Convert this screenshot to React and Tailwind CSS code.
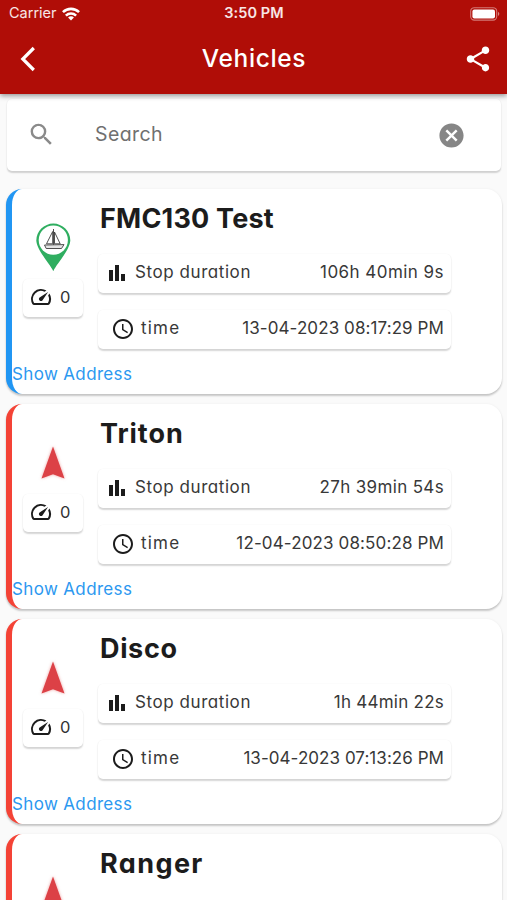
import React from "react";
import { MdSearch, MdCancel, MdShare, MdAccessTime, MdSpeed } from "react-icons/md";

const vehicles = [
  { name: "FMC130 Test", nameCls: "tracking-[0.2px]", kind: "boat", stop: "106h 40min 9s", stopCls: "tracking-[0.45px]", time: "13-04-2023 08:17:29 PM", timeCls: "tracking-[0.09px]" },
  { name: "Triton", nameCls: "tracking-[0.95px]", kind: "arrow", stop: "27h 39min 54s", stopCls: "tracking-[0.35px]", time: "12-04-2023 08:50:28 PM", timeCls: "tracking-[0.13px]" },
  { name: "Disco", nameCls: "tracking-[0.65px]", kind: "arrow", stop: "1h 44min 22s", stopCls: "tracking-[0.25px]", time: "13-04-2023 07:13:26 PM", timeCls: "tracking-[0.05px]" },
  { name: "Ranger", nameCls: "tracking-[1.4px]", kind: "arrow" },
];

const panel = "rounded-[5px] bg-white shadow-[0_1.5px_1.5px_rgba(0,0,0,0.16),0_0_2px_rgba(0,0,0,0.03)]";

function Wifi() {
  return (
    <svg className="ml-[5px] h-[14px] w-[18px]" viewBox="0 0 19 14" fill="none" stroke="#fff" strokeWidth="2.7">
      <path d="M1 5.1C5.8.4 13.2.4 18 5.1" />
      <path d="M4.1 8.7c3.1-3 7.7-3 10.8 0" />
      <path d="M6.4 10.6c1.7-1.5 4.5-1.5 6.200 0L9.5 13.9z" fill="#fff" stroke="none" />
    </svg>
  );
}

function Battery() {
  return (
    <svg className="h-[14px] w-[30px]" viewBox="0 0 30 14">
      <rect x=".7" y=".7" width="26" height="12.4" rx="3.6" fill="none" stroke="#fff" strokeOpacity=".45" strokeWidth="1.1" />
      <rect x="2.4" y="2.4" width="22.6" height="9" rx="2" fill="#fff" />
      <path d="M28 4.8c1.8.8 1.8 3.4 0 4.2z" fill="#fff" fillOpacity=".5" />
    </svg>
  );
}

function BoatPin() {
  return (
    <svg className="h-[49px] w-[36px]" viewBox="0 0 36 49">
      <path d="M17.3 48.2C13.5 40 .8 27.5.3 17.6a17 17 0 0 1 34 0C33.8 27.5 21 40 17.3 48.2z" fill="#2fae60" />
      <circle cx="17.3" cy="17.1" r="14.6" fill="#fff" />
      <g fill="none" stroke="#3d3d3d" strokeWidth=".9">
        <path d="M17.5 6v16M16.7 8.5 10.500 20.800h6.200zM18.500 9l5.700 11.800h-5.700z" />
        <path d="M8.500 22l19.500-.4-2.500 3.900H10.200z" fill="#e4e4e4" />
      </g>
    </svg>
  );
}

function ArrowMarker() {
  return (
    <svg className="h-[40px] w-[32px] drop-shadow-[0_0_1.5px_rgba(220,60,60,0.5)]" viewBox="0 0 32 40">
      <path d="M16 3.5 27.5 35.5 16 31.200 4.500 35.500z" fill="#dc4146" />
    </svg>
  );
}

function BarsIcon() {
  return (
    <svg className="size-6" viewBox="0 0 24 24" fill="#1c1c1c">
      <path d="M4 9h4v11H4zM16 13h4v7h-4zM10 4h4v16h-4z" />
    </svg>
  );
}

function Card({ v }) {
  const boat = v.kind === "boat";
  return (
    <article
      className={`flex h-[205px] shrink-0 flex-col rounded-[16px] border-l-[6px] bg-white shadow-[0_2px_2px_rgba(0,0,0,0.2),0_0_3px_rgba(0,0,0,0.05)] ${
        boat ? "border-[#2196f3]" : "border-[#f44336]"
      }`}
    >
      <div className="flex h-[160px]">
        <div className="flex w-[86px] flex-col items-center pr-[4px]">
          <div className={boat ? "flex h-[90px] pl-[2px] pt-[34px]" : "flex h-[90px] pt-[39px]"}>
            {boat ? <BoatPin /> : <ArrowMarker />}
          </div>
          {v.stop && (
            <div className={`${panel} flex h-[38px] w-[60px] items-center pb-[2px] pl-[6px]`}>
              <MdSpeed className="size-[24px] text-[#1c1c1c]" />
              <span className="ml-[7px] text-[16.5px] leading-none text-[#333]">0</span>
            </div>
          )}
        </div>
        <div className="w-[353px] text-[#383838]">
          <h2 className={`ml-[2px] mt-[10px] h-[40px] whitespace-nowrap text-[27px] font-bold leading-[40px] text-[#1c1c1c] ${v.nameCls}`}>
            {v.name}
          </h2>
          {v.stop && (
            <>
              <div className={`${panel} mt-[15px] flex h-[39px] items-center pb-[2px] pl-[7px] pr-[7px] text-[17px]`}>
                <BarsIcon />
                <span className="ml-[6px] tracking-[0.57px]">Stop duration</span>
                <span className={`ml-auto ${v.stopCls}`}>{v.stop}</span>
              </div>
              <div className={`${panel} mt-[17px] flex h-[39px] items-center pb-px pl-[13px] pr-[7px] text-[17px]`}>
                <MdAccessTime className="size-[24px] text-[#1c1c1c]" />
                <span className="ml-[6px] tracking-[1.2px]">time</span>
                <span className={`ml-auto ${v.timeCls}`}>{v.time}</span>
              </div>
            </>
          )}
        </div>
      </div>
      {v.stop && (
        <a className="mt-[12px] self-start text-[17px] leading-[26px] tracking-[0.35px] text-[#2c98f0]">Show Address</a>
      )}
    </article>
  );
}

export default function App() {
  return (
    <div className="flex h-[900px] w-[507px] flex-col overflow-hidden bg-[#fafafa] font-['Inter',sans-serif] [font-feature-settings:'cv11']">
      <header className="relative z-10 h-[94px] shrink-0 bg-[#b00d07] text-white shadow-[0_2px_5px_rgba(0,0,0,0.4)]">
        <div className="grid h-[27px] grid-cols-3 items-center pl-[8px] pr-[7px] [font-feature-settings:normal]">
          <div className="flex items-center pl-px text-[14.5px] leading-none text-white/90">
            Carrier
            <Wifi />
          </div>
          <div className="text-center text-[14.5px] font-semibold leading-none tracking-[0.1px] text-white/90">3:50 PM</div>
          <div className="flex justify-end">
            <Battery />
          </div>
        </div>
        <div className="flex h-[64px] items-center justify-between pl-[19px] pr-[14px]">
          <svg className="h-[26px] w-[30px]" viewBox="0 0 30 26" fill="none" stroke="#fff" strokeWidth="3.2">
            <path d="M14.8 2 3.8 13l11 11" />
          </svg>
          <h1 className="mb-[2px] mr-[4px] text-[24.5px] font-medium leading-none tracking-[0.65px]">Vehicles</h1>
          <MdShare className="size-[30px]" />
        </div>
      </header>
      <div className={`${panel} ml-[7px] mt-[5px] flex h-[72px] w-[494px] shrink-0 items-center pl-[20px] pr-[35px]`}>
        <MdSearch className="mb-[2px] size-[29px] text-[#8a8a8a]" />
        <span className="ml-[39px] text-[19.5px] tracking-[0.4px] text-[#707070]">Search</span>
        <MdCancel className="ml-auto size-[29px] text-[#868686]" />
      </div>
      <main className="mt-[18px] flex flex-col gap-[10px] pl-[6px] pr-[5px]">
        {vehicles.map((v) => (
          <Card key={v.name} v={v} />
        ))}
      </main>
    </div>
  );
}
